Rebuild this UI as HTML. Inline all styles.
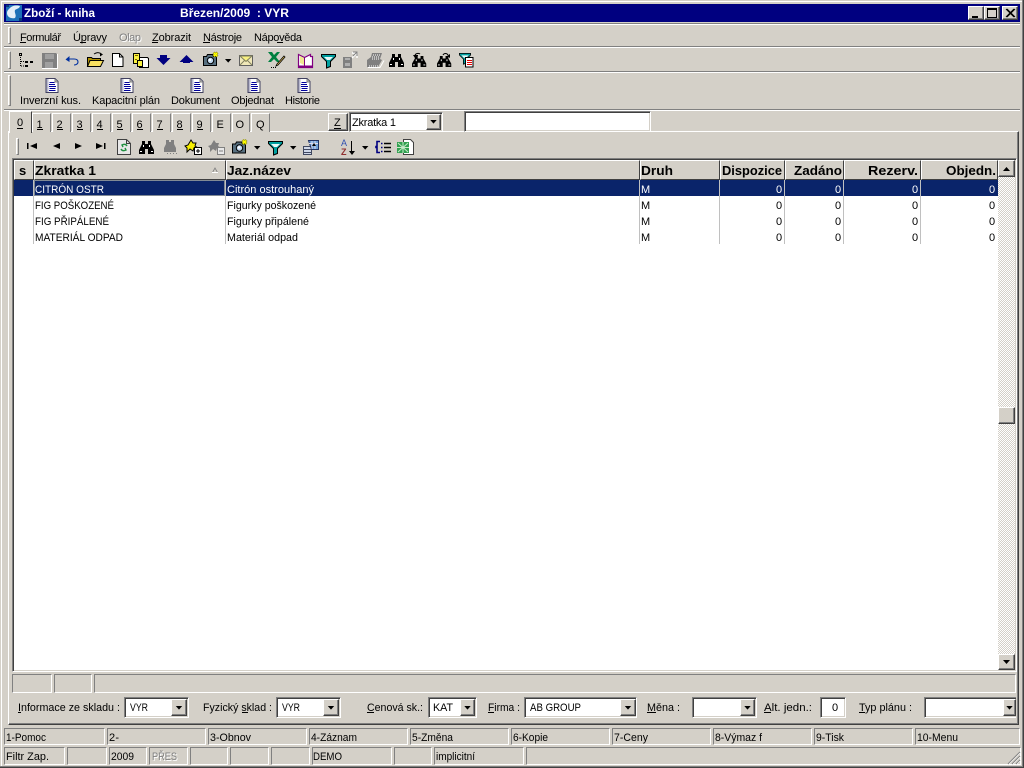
<!DOCTYPE html>
<html><head><meta charset="utf-8"><title>Zboží - kniha</title>
<style>
html,body{margin:0;padding:0;background:#d4d0c8;overflow:hidden}
#w{position:relative;width:1024px;height:768px;background:#d4d0c8;overflow:hidden}
#w div{position:absolute;box-sizing:border-box}
.u{background:#d4d0c8;border:1px solid;border-color:#fff #404040 #404040 #fff;box-shadow:inset -1px -1px #808080}
.h{background:#d4d0c8;border:1px solid;border-color:#fff #404040 #404040 #fff}
.s{background:#fff;border:1px solid;border-color:#808080 #fff #fff #808080;box-shadow:inset 1px 1px #404040,inset -1px -1px #d4d0c8}
.t{border:1px solid;border-color:#808080 #fff #fff #808080}
.e{height:2px;border-top:1px solid #808080;border-bottom:1px solid #fff}
.g{width:3px;border:1px solid;border-color:#fff #808080 #808080 #fff}
.k{background:repeating-conic-gradient(#fff 0 25%,#d4d0c8 0 50%) 0 0/2px 2px}
svg{position:absolute;left:0;top:0}
text{font-family:"Liberation Sans",sans-serif;font-size:11px;fill:#000;white-space:pre}
.b{font-weight:bold;font-size:13px}
.w{fill:#fff}
.tt{font-weight:bold;font-size:12px;fill:#fff}
.gr{fill:#808080}
.sh{fill:#fff}
</style></head><body><div id="w">
<!-- window frame -->
<div style="left:1px;top:1px;width:1022px;height:1px;background:#fff"></div>
<div style="left:1px;top:1px;width:1px;height:765px;background:#fff"></div>
<div style="left:1022px;top:0;width:1px;height:767px;background:#808080"></div>
<div style="left:1023px;top:0;width:1px;height:768px;background:#404040"></div>
<div style="left:0;top:766px;width:1023px;height:1px;background:#808080"></div>
<div style="left:0;top:767px;width:1024px;height:1px;background:#404040"></div>
<!-- title -->
<div style="left:4px;top:4px;width:1016px;height:18px;background:#000080"></div>
<div class="u" style="left:968px;top:6px;width:16px;height:14px"></div>
<div class="u" style="left:984px;top:6px;width:16px;height:14px"></div>
<div class="u" style="left:1002px;top:6px;width:16px;height:14px"></div>
<!-- bars -->
<div class="e" style="left:4px;top:23px;width:1016px"></div>
<div class="e" style="left:4px;top:46px;width:1016px"></div>
<div class="e" style="left:4px;top:71px;width:1016px"></div>
<div class="e" style="left:4px;top:109px;width:1016px"></div>
<div class="g" style="left:8px;top:27px;height:17px"></div>
<div class="g" style="left:8px;top:51px;height:18px"></div>
<div class="g" style="left:8px;top:75px;height:31px"></div>
<div class="g" style="left:16px;top:138px;height:17px"></div>
<!-- tab panel -->
<div style="left:8px;top:131px;width:1011px;height:594px;border:1px solid;border-color:#fff #404040 #404040 #fff;box-shadow:inset -1px -1px #808080"></div>
<div class="h" style="left:32px;top:113px;width:19px;height:19px;border-bottom:0;border-right-color:#808080"></div>
<div class="h" style="left:52px;top:113px;width:19px;height:19px;border-bottom:0;border-right-color:#808080"></div>
<div class="h" style="left:72px;top:113px;width:19px;height:19px;border-bottom:0;border-right-color:#808080"></div>
<div class="h" style="left:92px;top:113px;width:19px;height:19px;border-bottom:0;border-right-color:#808080"></div>
<div class="h" style="left:112px;top:113px;width:19px;height:19px;border-bottom:0;border-right-color:#808080"></div>
<div class="h" style="left:132px;top:113px;width:19px;height:19px;border-bottom:0;border-right-color:#808080"></div>
<div class="h" style="left:152px;top:113px;width:19px;height:19px;border-bottom:0;border-right-color:#808080"></div>
<div class="h" style="left:172px;top:113px;width:19px;height:19px;border-bottom:0;border-right-color:#808080"></div>
<div class="h" style="left:192px;top:113px;width:19px;height:19px;border-bottom:0;border-right-color:#808080"></div>
<div class="h" style="left:212px;top:113px;width:19px;height:19px;border-bottom:0;border-right-color:#808080"></div>
<div class="h" style="left:232px;top:113px;width:18px;height:19px;border-bottom:0;border-right-color:#808080"></div>
<div class="h" style="left:251px;top:113px;width:19px;height:19px;border-bottom:0;border-right-color:#808080"></div>
<div class="h" style="left:9px;top:111px;width:23px;height:22px;border-bottom:0"></div>
<!-- Z + combo + input -->
<div class="u" style="left:328px;top:113px;width:20px;height:18px"></div>
<div class="s" style="left:349px;top:112px;width:94px;height:20px"></div>
<div class="u" style="left:426px;top:114px;width:15px;height:16px"></div>
<div class="s" style="left:464px;top:111px;width:187px;height:21px"></div>
<!-- grid -->
<div class="s" style="left:12px;top:158px;width:1005px;height:514px"></div>
<div class="h" style="left:14px;top:160px;width:20px;height:20px"></div>
<div class="h" style="left:34px;top:160px;width:192px;height:20px"></div>
<div class="h" style="left:226px;top:160px;width:414px;height:20px"></div>
<div class="h" style="left:640px;top:160px;width:80px;height:20px"></div>
<div class="h" style="left:720px;top:160px;width:65px;height:20px"></div>
<div class="h" style="left:785px;top:160px;width:59px;height:20px"></div>
<div class="h" style="left:844px;top:160px;width:77px;height:20px"></div>
<div class="h" style="left:921px;top:160px;width:77px;height:20px"></div>
<div style="left:34px;top:180px;width:964px;height:16px;background:#0a246a"></div>
<div style="left:14px;top:180px;width:19px;height:16px;background:#0a246a"></div>
<div style="left:33px;top:180px;width:1px;height:64px;background:#c0c0c0"></div>
<div style="left:225px;top:180px;width:1px;height:64px;background:#c0c0c0"></div>
<div style="left:639px;top:180px;width:1px;height:64px;background:#c0c0c0"></div>
<div style="left:719px;top:180px;width:1px;height:64px;background:#c0c0c0"></div>
<div style="left:784px;top:180px;width:1px;height:64px;background:#c0c0c0"></div>
<div style="left:843px;top:180px;width:1px;height:64px;background:#c0c0c0"></div>
<div style="left:920px;top:180px;width:1px;height:64px;background:#c0c0c0"></div>
<!-- scrollbar -->
<div class="k" style="left:998px;top:177px;width:17px;height:478px"></div>
<div class="u" style="left:998px;top:160px;width:17px;height:17px"></div>
<div class="u" style="left:998px;top:407px;width:17px;height:17px"></div>
<div class="u" style="left:998px;top:654px;width:17px;height:16px"></div>
<!-- status in panel -->
<div class="t" style="left:12px;top:674px;width:40px;height:19px"></div>
<div class="t" style="left:54px;top:674px;width:38px;height:19px"></div>
<div class="t" style="left:94px;top:674px;width:922px;height:19px"></div>
<!-- filters -->
<div class="s" style="left:124px;top:697px;width:65px;height:21px"></div>
<div class="u" style="left:171px;top:699px;width:16px;height:17px"></div>
<div class="s" style="left:276px;top:697px;width:65px;height:21px"></div>
<div class="u" style="left:323px;top:699px;width:16px;height:17px"></div>
<div class="s" style="left:428px;top:697px;width:49px;height:21px"></div>
<div class="u" style="left:460px;top:699px;width:15px;height:17px"></div>
<div class="s" style="left:524px;top:697px;width:113px;height:21px"></div>
<div class="u" style="left:620px;top:699px;width:16px;height:17px"></div>
<div class="s" style="left:692px;top:697px;width:65px;height:21px"></div>
<div class="u" style="left:740px;top:699px;width:15px;height:17px"></div>
<div class="s" style="left:820px;top:697px;width:26px;height:21px"></div>
<div class="s" style="left:924px;top:697px;width:92px;height:21px;border-right:0"></div>
<div class="u" style="left:1003px;top:699px;width:13px;height:17px"></div>
<!-- F keys -->
<div class="t" style="left:4px;top:728px;width:101px;height:17px"></div>
<div class="t" style="left:107px;top:728px;width:99px;height:17px"></div>
<div class="t" style="left:208px;top:728px;width:99px;height:17px"></div>
<div class="t" style="left:309px;top:728px;width:99px;height:17px"></div>
<div class="t" style="left:410px;top:728px;width:99px;height:17px"></div>
<div class="t" style="left:511px;top:728px;width:99px;height:17px"></div>
<div class="t" style="left:612px;top:728px;width:99px;height:17px"></div>
<div class="t" style="left:713px;top:728px;width:99px;height:17px"></div>
<div class="t" style="left:814px;top:728px;width:99px;height:17px"></div>
<div class="t" style="left:915px;top:728px;width:105px;height:17px"></div>
<!-- status -->
<div class="t" style="left:4px;top:747px;width:61px;height:18px"></div>
<div class="t" style="left:67px;top:747px;width:40px;height:18px"></div>
<div class="t" style="left:109px;top:747px;width:38px;height:18px"></div>
<div class="t" style="left:149px;top:747px;width:39px;height:18px"></div>
<div class="t" style="left:190px;top:747px;width:38px;height:18px"></div>
<div class="t" style="left:230px;top:747px;width:39px;height:18px"></div>
<div class="t" style="left:271px;top:747px;width:39px;height:18px"></div>
<div class="t" style="left:312px;top:747px;width:80px;height:18px"></div>
<div class="t" style="left:394px;top:747px;width:38px;height:18px"></div>
<div class="t" style="left:434px;top:747px;width:90px;height:18px"></div>
<div class="t" style="left:526px;top:747px;width:495px;height:18px"></div>

<svg width="1024" height="768" viewBox="0 0 1024 768" xmlns="http://www.w3.org/2000/svg">
<defs>
<g id="tr"><path d="M0 0h6.4L3.200 3.600z" fill="#000"/></g>
<g id="dc"><path d="M.5.5h9l3 3v11H.5z" fill="#fff" stroke="#404060"/><path d="M1 1h2v13H1z" fill="#b8b8cc"/><path d="M4 4.500h5M3.500 6.500h6M3.500 8.500h7M4 10.500h6M3.500 12.500h6.500" stroke="#00009c" fill="none"/><path d="M9.500 1v3h3" fill="#c0c0c0" stroke="#808080"/></g>
<g id="bn"><path d="M3 0h3v3h3V0h3v3l3 6v4H9V8H6v5H0V9l3-6z" fill="#000"/><path d="M1 10.500h2M12 10.500h2M4.500 4v2M10.500 4v2" stroke="#fff" fill="none"/></g>
<g id="fn"><path d="M.5.500h14v2l-5 5v5l-4 1.500v-6.500l-5-5z" fill="#00a0a0" stroke="#000"/><path d="M3 3h9L9 6H6z" fill="#e8f8f8"/></g>
<g id="cm"><path d="M.5 4.500h3l1-2h5l1 2h3v9H.5z" fill="#587080" stroke="#000"/><circle cx="7.500" cy="8.500" r="3.200" fill="#c0d8f0" stroke="#000"/><circle cx="7" cy="8" r="1.200" fill="#fff"/><path d="M11 0h1v1h1V0h1v1h1v1h-1v1h1v1h-1v1h-1V4h-1v1h-1V4h-1V3h1V2h-1V1h1z" fill="#ffff00" stroke="#808000" stroke-width=".4"/></g>
</defs>

<!-- title bar -->
<rect x="6" y="5" width="16" height="16" fill="#1c70b8"/>
<path d="M9 9c3-4 8-4 11-3-1 3-2 2-5 4-1 3 2 5 0 8-4 1-8-1-8-5 0-2 1-3 2-4z" fill="#e4eef8"/>
<path d="M6 5h3v2H6zM19 18h3v3h-3z" fill="#0a3a78"/>
<text class="tt" x="24" y="17" textLength="71" lengthAdjust="spacingAndGlyphs">Zboží - kniha</text>
<text class="tt" x="180" y="17" textLength="109" lengthAdjust="spacingAndGlyphs">Březen/2009  : VYR</text>
<path d="M972 16h6v2h-6z" fill="#000"/>
<path d="M987.500 8.500h9v9h-9zM987.500 9.500h9" fill="none" stroke="#000"/>
<path d="M1006 9l8 8M1007 9l8 8M1014 9l-8 8M1015 9l-8 8" stroke="#000" fill="none"/>

<!-- menu -->
<text x="20" y="41" textLength="41">Formulář</text><path d="M20 42.500h6" stroke="#000"/>
<text x="73" y="41" textLength="34">Úpravy</text><path d="M80 42.500h6" stroke="#000"/>
<text class="sh" x="120" y="42" textLength="22">Olap</text><text class="gr" x="119" y="41" textLength="22">Olap</text>
<text x="152" y="41" textLength="39">Zobrazit</text><path d="M152 42.500h6" stroke="#000"/>
<text x="203" y="41" textLength="39">Nástroje</text><path d="M203 42.500h7" stroke="#000"/>
<text x="254" y="41" textLength="48">Nápověda</text><path d="M277 42.500h6" stroke="#000"/>

<!-- toolbar 1 -->
<g fill="none" stroke="#000">
<path d="M19.500 53.500h2v2h-2zM25.500 61.500h2v1h-2zM30.500 61.500h2v1h-2zM25.500 65.500h2v1h-2z"/>
<path d="M20.500 57v9M21 61.500h3M21 66h3" stroke-dasharray="1 1"/>
</g>
<path d="M42 53h14l1 1v14H42z" fill="#808080"/><path d="M45 54h9v5h-9zM45 62h8v6h-8z" fill="#a0a0a0"/><path d="M42 68.500h16M57.500 54v15" stroke="#fff"/>
<path d="M69 59h5c3 0 4 1.500 4 3s-1.500 3-4 3" fill="none" stroke="#0030a0" stroke-width="1.100"/><path d="M65.500 59.500l4-3.500v6z" fill="#0030a0"/>
<path d="M87.500 57.500h4l1 1h8v8h-13z" fill="#b09000" stroke="#000"/><path d="M90 60.500h13.500l-3 6h-13z" fill="#f8e060" stroke="#000"/><path d="M94 54c3-2 5-2 7 0" fill="none" stroke="#000"/><path d="M100 52.500l3 2-3 2z" fill="#000"/>
<path d="M112.500 53.500h7l3.500 3.500v9.500h-10.500z" fill="#fff" stroke="#000"/><path d="M119.500 53.500v3.500h3.500" fill="none" stroke="#000"/>
<path d="M133.500 53.500h6v4h3v6h-9z" fill="#f8f040" stroke="#000"/><path d="M139.500 57.500h8l1 1v9h-9z" fill="#fff" stroke="#000"/><path d="M137.500 60.500h5v6h-5z" fill="#f8f040" stroke="#000"/><path d="M135 55.500h3M135 59.500h2" stroke="#806000"/>
<path d="M160 55h7v3h3.500l-7 7-7-7h3.500z" fill="#000080"/>
<path d="M183 63h7v-1h3.500l-7-7-7 7h3.500z" fill="#000080"/>
<use href="#cm" x="203" y="52"/>
<use href="#tr" x="225" y="59"/>
<path d="M239.500 55.500h13v10h-13z" fill="#f0e8b8" stroke="#606060"/><path d="M240 56l6 5.500 6-5.500z" fill="#f8f080" stroke="#808060"/><path d="M240 65l5-5M252 65l-5-5" stroke="#808060"/>
<g transform="translate(268,52)"><path d="M0 0h4l2 3 3-3h3L8 5l4 5H9L6 7l-3 3H0l4-5z" fill="#008040"/><path d="M16 4l1 1-7 8-2 1 1-2z" fill="#f8d060" stroke="#000" stroke-width=".8"/><path d="M3 15.500h1M5 15.500h1M7 15.500h1" stroke="#000"/></g>
<path d="M298.500 54.500l6 3 6-3v2h2v11h-14z" fill="#fff" stroke="#800080" stroke-width="1.200"/><path d="M304.500 57.500v8" stroke="#800080"/><path d="M298 66.500h14" stroke="#800080" stroke-width="2"/><path d="M300 56l4 2v7l-4-2z" fill="#f0e890"/>
<use href="#fn" x="321" y="54"/>
<path d="M343 57h9v11h-9z" fill="#808080"/><path d="M345 63h5v3h-5zM345 58h5v2h-5z" fill="#b0b0b0"/><path d="M352 53h5v5M357 53l-5 5" stroke="#fff" fill="none" stroke-width="1.400"/><path d="M353 52h4v4M357 52l-4 4" stroke="#808080" fill="none"/>
<path d="M367 60l4-3 1-4h10l-2 6 2 1-4 7h-11z" fill="#808080"/><path d="M373 55h8M372 57h8M372 59h7M369 66h10" stroke="#fff" stroke-dasharray="1 1"/><path d="M368 67.500h12l4-7" stroke="#fff" fill="none"/>
<use href="#bn" x="389" y="54"/>
<g transform="translate(412,56)"><use href="#bn" transform="scale(.95 .85)"/></g><path d="M415 56c0-3 4-3 5-2" fill="none" stroke="#000"/><path d="M413 55h5v1h-2v2h-1z" fill="#000"/>
<g transform="translate(437,56)"><use href="#bn" transform="scale(.95 .85)"/></g><path d="M443 55c1-2 4-2 5 0" fill="none" stroke="#000"/><path d="M450 54v4l-3-2z" fill="#000"/>
<g transform="translate(459,53) scale(.8)"><use href="#fn"/></g><path d="M465.500 57.500h7.500v9.500h-7.500z" fill="#fff" stroke="#000"/><path d="M467 60.500h5M467 62.500h5M467 64.500h5" stroke="#e00000"/>

<!-- toolbar 2 -->
<use href="#dc" x="45.500" y="78"/><use href="#dc" x="120.500" y="78"/><use href="#dc" x="190.500" y="78"/><use href="#dc" x="247.500" y="78"/><use href="#dc" x="297.500" y="78"/>
<text x="20" y="104" textLength="61">Inverzní kus.</text>
<text x="92" y="104" textLength="68">Kapacitní plán</text>
<text x="171" y="104" textLength="49">Dokument</text>
<text x="231" y="104" textLength="43">Objednat</text>
<text x="285" y="104" textLength="35">Historie</text>

<!-- tabs -->
<text x="17" y="126">0</text><path d="M17 128.500h6" stroke="#000"/>
<text x="36.500" y="128">1</text><path d="M37 129.500h6" stroke="#000"/>
<text x="56.500" y="128">2</text><path d="M57 129.500h6" stroke="#000"/>
<text x="76.500" y="128">3</text><path d="M77 129.500h6" stroke="#000"/>
<text x="96.500" y="128">4</text><path d="M97 129.500h6" stroke="#000"/>
<text x="116.500" y="128">5</text><path d="M117 129.500h6" stroke="#000"/>
<text x="136.500" y="128">6</text><path d="M137 129.500h6" stroke="#000"/>
<text x="156.500" y="128">7</text><path d="M157 129.500h6" stroke="#000"/>
<text x="176.500" y="128">8</text><path d="M177 129.500h6" stroke="#000"/>
<text x="196.500" y="128">9</text><path d="M197 129.500h6" stroke="#000"/>
<text x="216.500" y="128">E</text>
<text x="235.500" y="128">O</text>
<text x="256" y="128">Q</text>

<text x="334" y="126">Z</text><path d="M334 128.500h7" stroke="#000"/>
<text x="352" y="126" textLength="44">Zkratka 1</text>
<use href="#tr" x="430.300" y="120"/>

<!-- nav toolbar -->
<path d="M27 143h1.500v6H27zM37 143v6l-7-3z" fill="#000"/>
<path d="M60 143v6l-7-3z" fill="#000"/>
<path d="M75 143v6l7-3z" fill="#000"/>
<path d="M96 143v6l7-3zM104 143h1.500v6H104z" fill="#000"/>
<path d="M117.500 139.500h9l4 4v11h-13z" fill="#e8e8e8" stroke="#404040"/><path d="M126.500 139.500v4h4" fill="none" stroke="#404040"/><path d="M127 146c-1-2-3-2-5-1l1 2M121 149c1 2 3 2 5 1l-1-2" fill="none" stroke="#209040" stroke-width="1.400"/>
<use href="#bn" x="139" y="141"/>
<path d="M166 140h3v2h2v-2h3v4l2 4v4h-12v-4l2-4z" fill="#808080"/><path d="M167 153.500h1M170 153.500h1M173 153.500h1M176 153.500h1" stroke="#808080"/>
<path d="M191 140l2 3h3l-1 3 3 2h-4l-1 3-3-2-3 3v-4l-2-2 3-1z" fill="#f8f000" stroke="#000"/><rect x="194.500" y="147.500" width="7" height="7" fill="#fff" stroke="#000"/><path d="M196 151h4M198 149v4" stroke="#000"/>
<path d="M214 140l2 3h3l-1 3 3 2h-4l-1 3-3-2-3 3v-4l-2-2 3-1z" fill="#808080"/><rect x="217.500" y="147.500" width="7" height="7" fill="#e8e8e8" stroke="#808080"/><path d="M219 151h4" stroke="#808080"/>
<use href="#cm" x="232" y="139.500"/>
<use href="#tr" x="254" y="146"/>
<use href="#fn" x="268" y="141"/>
<use href="#tr" x="290" y="146"/>
<path d="M303.500 146.500h8v3h-8zM303.500 149.500h8v3h-8zM303.500 152.500h8v2h-8z" fill="#d0d8e8" stroke="#404860"/><path d="M308.500 140.500h10v9h-7z" fill="#70a0d8" stroke="#203060"/><path d="M309 143.500h9M312 141v8M315 141v8" stroke="#dde"/><path d="M312 146l2-3 2 3z" fill="#000"/>
<text x="341" y="146" style="font-size:9px;fill:#3050b0">A</text><text x="341" y="155" style="font-size:9px;font-weight:bold;fill:#903030">Z</text>
<path d="M351.500 141v12" stroke="#000"/><path d="M349 151h6l-3 4z" fill="#000"/>
<use href="#tr" x="362" y="146"/>
<path d="M380 141.500h-3v5h-1v1h1v5h3" fill="none" stroke="#000080" stroke-width="1.600"/><path d="M384 143.500h7M384 147.500h7M384 151.500h7" stroke="#000" stroke-width="1.400"/><path d="M381 143.500h1.500M381 147.500h1.500M381 151.500h1.500" stroke="#000080" stroke-width="1.400"/>
<path d="M403.500 139.500h7l3 3v12h-10z" fill="#fff" stroke="#404040"/><path d="M397 142h12v11h-12z" fill="#30a050"/><path d="M398 143l10 9M408 143l-10 9M397 147.500h12M403 142v11" stroke="#c8e8c8" stroke-width="1"/>

<!-- grid header -->
<text x="19" y="175" class="b">s</text>
<text x="35" y="175" class="b" textLength="61" lengthAdjust="spacingAndGlyphs">Zkratka 1</text>
<path d="M212.500 172.500l2.500-4.500 2.500 4.500z" fill="none" stroke="#808080" stroke-width=".8"/><path d="M212 172.500h6" stroke="#fff"/>
<text x="227" y="175" class="b" textLength="64" lengthAdjust="spacingAndGlyphs">Jaz.název</text>
<text x="641" y="175" class="b" textLength="32" lengthAdjust="spacingAndGlyphs">Druh</text>
<text x="722" y="175" class="b" textLength="60" lengthAdjust="spacingAndGlyphs">Dispozice</text>
<text x="794" y="175" class="b" textLength="48" lengthAdjust="spacingAndGlyphs">Zadáno</text>
<text x="868" y="175" class="b" textLength="50" lengthAdjust="spacingAndGlyphs">Rezerv.</text>
<text x="946" y="175" class="b" textLength="50" lengthAdjust="spacingAndGlyphs">Objedn.</text>
<rect x="34.500" y="180.500" width="190" height="15" fill="none" stroke="#f8f0c0" stroke-dasharray="1 1"/>

<!-- rows -->
<text class="w" x="35" y="193" textLength="69" lengthAdjust="spacingAndGlyphs">CITRÓN OSTR</text>
<text class="w" x="227" y="193" textLength="87" lengthAdjust="spacingAndGlyphs">Citrón ostrouhaný</text>
<text class="w" x="641" y="193">M</text>
<text class="w" x="776" y="193">0</text><text class="w" x="835" y="193">0</text><text class="w" x="912" y="193">0</text><text class="w" x="989" y="193">0</text>
<text x="35" y="209" textLength="79" lengthAdjust="spacingAndGlyphs">FIG POŠKOZENÉ</text>
<text x="227" y="209" textLength="89" lengthAdjust="spacingAndGlyphs">Figurky poškozené</text>
<text x="641" y="209">M</text>
<text x="776" y="209">0</text><text x="835" y="209">0</text><text x="912" y="209">0</text><text x="989" y="209">0</text>
<text x="35" y="225" textLength="74" lengthAdjust="spacingAndGlyphs">FIG PŘIPÁLENÉ</text>
<text x="227" y="225" textLength="82" lengthAdjust="spacingAndGlyphs">Figurky připálené</text>
<text x="641" y="225">M</text>
<text x="776" y="225">0</text><text x="835" y="225">0</text><text x="912" y="225">0</text><text x="989" y="225">0</text>
<text x="35" y="241" textLength="88" lengthAdjust="spacingAndGlyphs">MATERIÁL ODPAD</text>
<text x="227" y="241" textLength="71" lengthAdjust="spacingAndGlyphs">Materiál odpad</text>
<text x="641" y="241">M</text>
<text x="776" y="241">0</text><text x="835" y="241">0</text><text x="912" y="241">0</text><text x="989" y="241">0</text>

<!-- scroll arrows -->
<path d="M1003 171h7l-3.500-4z" fill="#000"/>
<path d="M1003 660h7l-3.500 4z" fill="#000"/>

<!-- filter labels -->
<text x="18" y="711" textLength="102" lengthAdjust="spacingAndGlyphs">Informace ze skladu :</text><path d="M18 712.500h3" stroke="#000"/>
<text x="203" y="711" textLength="69" lengthAdjust="spacingAndGlyphs">Fyzický sklad :</text><path d="M242 712.500h6" stroke="#000"/>
<text x="367" y="711" textLength="56" lengthAdjust="spacingAndGlyphs">Cenová sk.:</text><path d="M367 712.500h7" stroke="#000"/>
<text x="488" y="711" textLength="32" lengthAdjust="spacingAndGlyphs">Firma :</text><path d="M488 712.500h6" stroke="#000"/>
<text x="647" y="711" textLength="33" lengthAdjust="spacingAndGlyphs">Měna :</text><path d="M647 712.500h9" stroke="#000"/>
<text x="764" y="711" textLength="48" lengthAdjust="spacingAndGlyphs">Alt. jedn.:</text><path d="M764 712.500h7" stroke="#000"/>
<text x="859" y="711" textLength="53" lengthAdjust="spacingAndGlyphs">Typ plánu :</text><path d="M859 712.500h6" stroke="#000"/>
<text x="130" y="711" textLength="18" lengthAdjust="spacingAndGlyphs">VYR</text>
<text x="282" y="711" textLength="18" lengthAdjust="spacingAndGlyphs">VYR</text>
<text x="433" y="711" textLength="20" lengthAdjust="spacingAndGlyphs">KAT</text>
<text x="530" y="711" textLength="51" lengthAdjust="spacingAndGlyphs">AB GROUP</text>
<text x="832" y="711">0</text>
<use href="#tr" x="175.800" y="706"/><use href="#tr" x="327.800" y="706"/><use href="#tr" x="464.300" y="706"/><use href="#tr" x="624.800" y="706"/><use href="#tr" x="744.300" y="706"/><use href="#tr" x="1006.300" y="706"/>

<!-- F keys -->
<text x="6" y="741" textLength="40" lengthAdjust="spacingAndGlyphs">1-Pomoc</text>
<text x="109" y="741" textLength="10">2-</text>
<text x="210" y="741" textLength="41" lengthAdjust="spacingAndGlyphs">3-Obnov</text>
<text x="311" y="741" textLength="46" lengthAdjust="spacingAndGlyphs">4-Záznam</text>
<text x="412" y="741" textLength="41" lengthAdjust="spacingAndGlyphs">5-Změna</text>
<text x="513" y="741" textLength="35" lengthAdjust="spacingAndGlyphs">6-Kopie</text>
<text x="614" y="741" textLength="34" lengthAdjust="spacingAndGlyphs">7-Ceny</text>
<text x="715" y="741" textLength="47" lengthAdjust="spacingAndGlyphs">8-Výmaz f</text>
<text x="816" y="741" textLength="28" lengthAdjust="spacingAndGlyphs">9-Tisk</text>
<text x="917" y="741" textLength="41" lengthAdjust="spacingAndGlyphs">10-Menu</text>
<!-- status -->
<text x="6" y="760" textLength="43" lengthAdjust="spacingAndGlyphs">Filtr Zap.</text>
<text x="111" y="760" textLength="23" lengthAdjust="spacingAndGlyphs">2009</text>
<text class="sh" x="153" y="761" textLength="25" lengthAdjust="spacingAndGlyphs">PŘES</text><text class="gr" x="152" y="760" textLength="25" lengthAdjust="spacingAndGlyphs">PŘES</text>
<text x="313" y="760" textLength="29" lengthAdjust="spacingAndGlyphs">DEMO</text>
<text x="436" y="760" textLength="39" lengthAdjust="spacingAndGlyphs">implicitní</text>
<path d="M1008 764l12-12M1012 764l8-8M1016 764l4-4" stroke="#808080" stroke-width="1.200"/><path d="M1009 764l11-11M1013 764l7-7M1017 764l3-3" stroke="#fff" stroke-width=".6"/>
</svg>
</div></body></html>
